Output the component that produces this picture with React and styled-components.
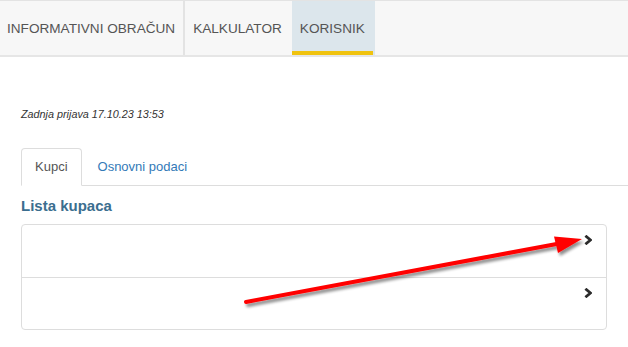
import React from "react";
import styled, { createGlobalStyle } from "styled-components";

const GlobalStyle = createGlobalStyle`
  body {
    margin: 0;
    background: #fff;
    font-family: "Liberation Sans", Arial, sans-serif;
    color: #333;
  }
`;

const navItems = [
  { label: "INFORMATIVNI OBRAČUN", divider: true },
  { label: "KALKULATOR" },
  { label: "KORISNIK", active: true },
];

const customers = [{ id: 1 }, { id: 2 }];

const App = () => {
  return (
    <Page>
      <GlobalStyle />
      <NavBar>
        {navItems.map((item) => (
          <NavItem
            key={item.label}
            $active={item.active}
            $divider={item.divider}
          >
            {item.label}
          </NavItem>
        ))}
      </NavBar>

      <Content>
        <LastLogin>Zadnja prijava 17.10.23 13:53</LastLogin>

        <Tabs>
          <Tab $active>Kupci</Tab>
          <Tab>Osnovni podaci</Tab>
        </Tabs>

        <SectionTitle>Lista kupaca</SectionTitle>

        <ListGroup>
          {customers.map((c) => (
            <ListItem key={c.id}>
              <Chevron viewBox="0 0 8 10">
                <path d="M1.4 0.8 L6.4 5 L1.4 9.2" />
              </Chevron>
            </ListItem>
          ))}
        </ListGroup>
      </Content>

      <Arrow viewBox="0 0 628 347">
        <defs>
          <filter id="shadow" x="-10%" y="-50%" width="120%" height="200%">
            <feGaussianBlur in="SourceAlpha" stdDeviation="1.6" />
            <feOffset dx="2" dy="3" result="blur" />
            <feComponentTransfer>
              <feFuncA type="linear" slope="0.45" />
            </feComponentTransfer>
            <feMerge>
              <feMergeNode />
              <feMergeNode in="SourceGraphic" />
            </feMerge>
          </filter>
        </defs>
        <g filter="url(#shadow)" fill="#ff0000" stroke="none">
          <line
            x1="246"
            y1="302"
            x2="562"
            y2="243"
            stroke="#ff0000"
            strokeWidth="4"
            strokeLinecap="round"
          />
          <polygon points="582,239 554,236.5 558,253" />
        </g>
      </Arrow>
    </Page>
  );
};

const Page = styled.div`
  position: relative;
  width: 628px;
  height: 347px;
  overflow: hidden;
`;

const NavBar = styled.nav`
  display: flex;
  height: 54px;
  background: #f7f7f7;
  border-top: 1px solid #e3e3e3;
  border-bottom: 2px solid #e6e6e6;
`;

const NavItem = styled.div`
  display: flex;
  align-items: center;
  padding: 0 8px;
  font-size: 13.6px;
  color: #555;
  background: ${(props) => (props.$active ? "#dce6ec" : "transparent")};
  border-right: 2px solid
    ${(props) => (props.$divider ? "#e3e3e3" : "transparent")};
  box-shadow: ${(props) =>
    props.$active ? "inset 0 -4px 0 #f0c30f" : "none"};

  &:first-child {
    padding-left: 7px;
  }
`;

const Content = styled.div`
  padding: 0 21px;
`;

const LastLogin = styled.p`
  margin: 50px 0 0;
  font-size: 10.8px;
  font-style: italic;
  line-height: 14px;
  color: #333;
`;

const Tabs = styled.div`
  display: flex;
  margin: 27px -21px 0 0;
  border-bottom: 1px solid #ddd;
`;

const Tab = styled.div`
  padding: 9px 13px;
  margin-bottom: -1px;
  margin-right: 2px;
  font-size: 13px;
  line-height: 18px;
  color: ${(props) => (props.$active ? "#555" : "#337ab7")};
  background: ${(props) => (props.$active ? "#fff" : "transparent")};
  border: 1px solid ${(props) => (props.$active ? "#ddd" : "transparent")};
  border-bottom-color: ${(props) => (props.$active ? "#fff" : "transparent")};
  border-radius: 4px 4px 0 0;
`;

const SectionTitle = styled.h3`
  margin: 11px 0 9px;
  font-size: 15px;
  line-height: 18px;
  font-weight: bold;
  color: #3b6e8f;
`;

const ListGroup = styled.div`
  border: 1px solid #ddd;
  border-radius: 4px;
`;

const ListItem = styled.div`
  display: flex;
  justify-content: flex-end;
  align-items: flex-start;
  height: 52px;
  padding: 10px 14px 0 15px;
  box-sizing: border-box;

  & + & {
    border-top: 1px solid #ddd;
  }
`;

const Chevron = styled.svg`
  width: 8px;
  height: 10px;
  fill: none;
  stroke: #2b2b2b;
  stroke-width: 2.8;
`;

const Arrow = styled.svg`
  position: absolute;
  left: 0;
  top: 0;
  width: 628px;
  height: 347px;
  pointer-events: none;
`;

export default App;
